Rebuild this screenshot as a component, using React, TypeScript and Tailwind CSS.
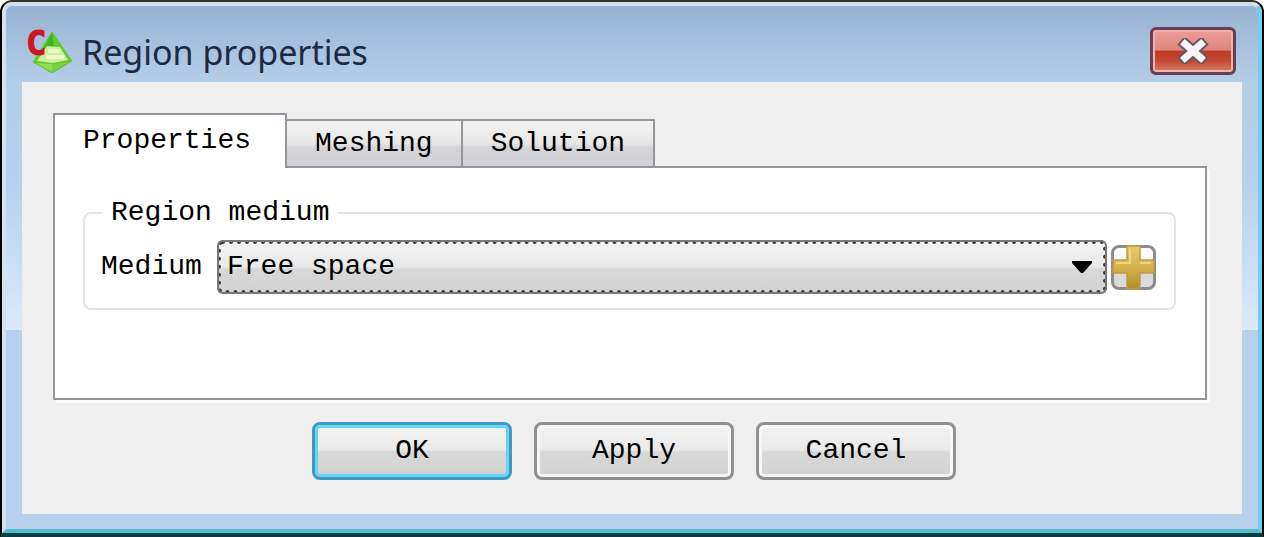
import { useState } from "react";

const tabs = [
  { id: "properties", label: "Properties" },
  { id: "meshing", label: "Meshing" },
  { id: "solution", label: "Solution" },
];

const actions = ["OK", "Apply", "Cancel"];

function AppIcon() {
  return (
    <svg width="48" height="48" viewBox="0 0 48 48" className="shrink-0 overflow-visible" aria-hidden="true">
      <path d="M26 4 L46 33 L26 45 L7 34 Z" fill="#62c931" stroke="#62c931" strokeLinejoin="round" />
      <path d="M26 5 L28 19 L16 24 Z" fill="#3fb023" />
      <path d="M21 18 L34 19 L42 32 L27 35 L11 33 Z" fill="#cdef98" />
      <path d="M22 23 H34 M20 29 H38" stroke="#eaf9cf" strokeWidth="4" />
      <path d="M10 35 L26 36 V44 Z" fill="#8fdf55" />
      <path d="M43 34 L26 36 V44 Z" fill="#78d13f" />
      <text
        x="0"
        y="27"
        fill="#d01525"
        stroke="#d01525"
        strokeWidth="1"
        fontSize="34"
        fontWeight="700"
        fontFamily="DejaVu Sans Mono, monospace"
      >
        C
      </text>
    </svg>
  );
}

function TitleBar() {
  return (
    <header className="flex items-start justify-between pt-5 pb-1 pl-1">
      <div className="flex items-center gap-2">
        <AppIcon />
        <h1 className="font-['Noto_Sans','Open_Sans',sans-serif] text-[34px] leading-[52px] text-[#1c2a44]">
          Region properties
        </h1>
      </div>
      <button
        type="button"
        aria-label="Close"
        className="mt-px mr-1.5 flex h-12 w-[86px] items-center justify-center rounded-md border-3 border-[#6a3f55] bg-[linear-gradient(180deg,#ea9f96_0%,#dd877c_48%,#bd3a25_50%,#c44a33_75%,#d9846f_100%)] shadow-[inset_0_0_0_2px_#efb3aa]"
      >
        <svg width="32" height="26" viewBox="0 0 32 26" aria-hidden="true">
          <path d="M8 6 L24 20 M24 6 L8 20" stroke="#6b5660" strokeWidth="11" strokeLinecap="square" />
          <path d="M8 6 L24 20 M24 6 L8 20" stroke="#f5f5f7" strokeWidth="7" strokeLinecap="square" />
        </svg>
      </button>
    </header>
  );
}

function MediumField() {
  return (
    <fieldset className="rounded-lg border-2 border-[#dfe7ec] pt-[11px] pr-[18px] pb-3.5 pl-4">
      <legend className="ml-0.5 px-2 leading-8">Region medium</legend>
      <div className="flex items-center">
        <label htmlFor="medium" className="w-[116px] shrink-0">
          Medium
        </label>
        <div className="relative grow">
          <select
            id="medium"
            defaultValue="free"
            className="block h-[54px] w-full appearance-none rounded-md border-4 border-dotted border-[#3a3a3a] bg-[linear-gradient(180deg,#f3f3f3_0%,#e9e9e9_50%,#d8d8d8_54%,#d2d2d2_100%)] bg-origin-border pl-1.5 text-black outline-2 -outline-offset-2 outline-[#777777]"
          >
            <option value="free">Free space</option>
          </select>
          <svg
            width="20"
            height="12"
            viewBox="0 0 20 12"
            className="pointer-events-none absolute top-[21px] right-[15px]"
            aria-hidden="true"
          >
            <path d="M0 0 H20 V2 L11 12 H9 L0 2 Z" fill="#000000" />
          </svg>
        </div>
        <button
          type="button"
          aria-label="Add medium"
          className="ml-1 flex size-[45px] shrink-0 items-center justify-center rounded-lg border-3 border-[#8c8c8c] bg-[linear-gradient(180deg,#ffffff_0%,#f0f0f0_50%,#d6d6d6_54%,#dddddd_100%)]"
        >
          <svg width="43" height="45" viewBox="0 0 43 45" className="shrink-0" aria-hidden="true">
            <defs>
              <linearGradient id="gold" x1="0" y1="0" x2="0" y2="1">
                <stop offset="0" stopColor="#e6cb6c" />
                <stop offset="0.5" stopColor="#d6b34e" />
                <stop offset="1" stopColor="#b18c2c" />
              </linearGradient>
            </defs>
            <path
              d="M15 1 H28 V15 H42 V28 H28 V44 H15 V28 H1 V15 H15 Z"
              fill="url(#gold)"
              stroke="#bf9b45"
              strokeWidth="1.5"
            />
            <path d="M18 4 V18 H4 M28 18 H39" stroke="#ecd584" strokeWidth="2" fill="none" />
          </svg>
        </button>
      </div>
    </fieldset>
  );
}

export default function App() {
  const [active, setActive] = useState("properties");

  return (
    <main className="bg-white font-['Liberation_Mono',monospace] text-[28px] leading-8 text-black">
      <div className="overflow-hidden rounded-t-xl border-2 border-b-4 border-t-[#3a322c] border-x-black border-b-[#0b3c44]">
        <div className="rounded-t-[10px] border-4 border-t-[#d3dfec] border-r-[#6cd0f0] border-b-[#4cc0cc] border-l-[#d3e2f2] bg-[linear-gradient(180deg,#98b3d2_0px,#b5cee8_76px,#b8d0eb_180px,#dce9f8_324px,#b8d0eb_324px,#b8d0eb_100%)] px-4 pb-[15px]">
          <TitleBar />
          <section className="bg-[#efefef] pt-[31px] pr-[35px] pb-[34px] pl-[31px]">
            <div role="tablist" className="flex items-end">
              {tabs.map((tab) => (
                <button
                  key={tab.id}
                  type="button"
                  role="tab"
                  aria-selected={active === tab.id}
                  onClick={() => setActive(tab.id)}
                  className={
                    active === tab.id
                      ? "relative -mb-0.5 h-[55px] border-2 border-b-0 border-[#94949c] bg-white pr-[34px] pb-0.5 pl-7"
                      : "-ml-0.5 h-[47px] border-2 border-b-0 border-[#94949c] bg-[linear-gradient(180deg,#f4f4f4_0%,#e6e6e6_50%,#d6d6da_58%,#cfcfd3_100%)] px-7"
                  }
                >
                  {tab.label}
                </button>
              ))}
            </div>
            <div
              role="tabpanel"
              className="border-2 border-[#94949c] bg-white pt-[29px] pr-[29px] pb-[88px] pl-7 shadow-[3px_3px_0_#fbfbfb]"
            >
              <MediumField />
            </div>
            <div className="mt-[22px] flex justify-center gap-[22px] pl-2">
              {actions.map((action) => (
                <button
                  key={action}
                  type="button"
                  className={
                    action === "OK"
                      ? "h-[58px] w-[200px] rounded-lg border-3 border-[#4298bd] bg-[linear-gradient(180deg,#f3f3f3_0%,#e9e9e9_48%,#d8d8d8_52%,#d2d2d2_100%)] shadow-[inset_0_0_0_3px_#62d6f4]"
                      : "h-[58px] w-[200px] rounded-lg border-3 border-[#909090] bg-[linear-gradient(180deg,#f3f3f3_0%,#e9e9e9_48%,#d8d8d8_52%,#d2d2d2_100%)] shadow-[inset_0_0_0_3px_#f6f6f6]"
                  }
                >
                  {action}
                </button>
              ))}
            </div>
          </section>
        </div>
      </div>
    </main>
  );
}
